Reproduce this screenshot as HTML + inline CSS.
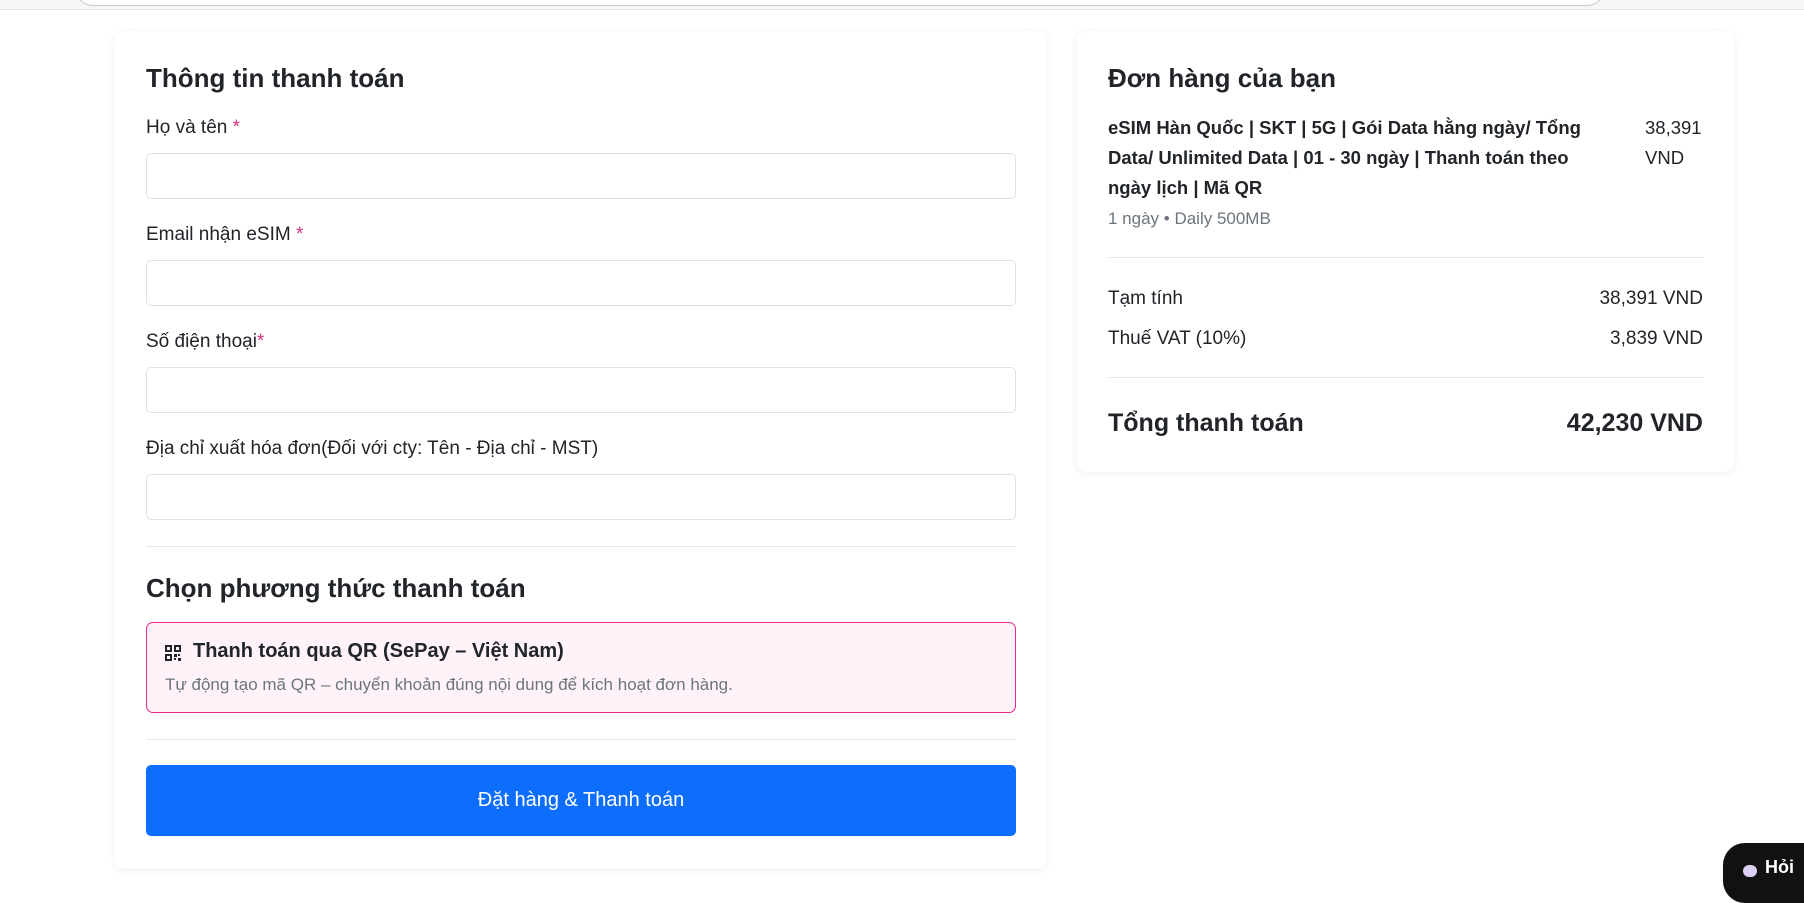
<!DOCTYPE html>
<html><head><meta charset="utf-8"><style>
*{box-sizing:border-box;margin:0;padding:0}
body{width:1804px;height:878px;overflow:hidden;background:#fff;font-family:"Liberation Sans",sans-serif;color:#212529;position:relative}
.top{position:absolute;left:0;top:0;width:1804px;height:10px;background:#f6f6f6;border-bottom:1px solid #e6e6e6}
.search{position:absolute;left:75px;top:-30px;width:1530px;height:36px;border:1px solid #ccc;border-radius:18px;background:#fff}
.card{position:absolute;background:#fff;border-radius:10px;box-shadow:0 1px 8px rgba(0,0,0,.07)}
.abs{position:absolute;white-space:nowrap}
h2{font-size:26px;font-weight:bold}
.lab{font-size:19px;color:#212529}
.req{color:#d63384}
.inp{position:absolute;left:31px;width:870px;height:46px;border:1px solid #dee2e6;border-radius:5px;background:#fff}
.hr{position:absolute;height:1px;background:#e5e7ea}
.pay{position:absolute;left:31px;top:591px;width:870px;height:91px;border:1.5px solid #e8288c;border-radius:7px;background:#fff3f9}
.btn{position:absolute;left:31px;top:734px;width:870px;height:71px;background:#0d6efd;border-radius:5px;color:#fff;font-size:20px;text-align:center;line-height:71px}
.chat{position:absolute;left:1723px;top:843px;width:120px;height:60px;background:#111;border-radius:22px}
</style></head><body>
<div class="top"><div class="search"></div></div>

<div class="card" style="left:115px;top:31px;width:932px;height:838px">
  <h2 class="abs" style="left:31px;top:32px">Thông tin thanh toán</h2>
  <div class="abs lab" style="left:31px;top:86px">Họ và tên <span class="req">*</span></div>
  <div class="inp" style="top:122px"></div>
  <div class="abs lab" style="left:31px;top:193px">Email nhận eSIM <span class="req">*</span></div>
  <div class="inp" style="top:229px"></div>
  <div class="abs lab" style="left:31px;top:300px">Số điện thoại<span class="req">*</span></div>
  <div class="inp" style="top:336px"></div>
  <div class="abs lab" style="left:31px;top:407px">Địa chỉ xuất hóa đơn(Đối với cty: Tên - Địa chỉ - MST)</div>
  <div class="inp" style="top:443px"></div>
  <div class="hr" style="left:31px;top:515px;width:870px"></div>
  <h2 class="abs" style="left:31px;top:542px">Chọn phương thức thanh toán</h2>
  <div class="pay">
    <svg class="abs" style="left:18px;top:22px" width="16" height="16" viewBox="0 0 16 16"><g fill="none" stroke="#212529" stroke-width="2"><rect x="1" y="1" width="5" height="5"/><rect x="10" y="1" width="5" height="5"/><rect x="1" y="10" width="5" height="5"/></g><rect x="9" y="9" width="3" height="3" fill="#212529"/><rect x="13" y="13" width="3" height="3" fill="#212529"/><rect x="13" y="9" width="2" height="2" fill="#212529"/><rect x="9" y="13" width="2" height="2" fill="#212529"/></svg>
    <div class="abs" style="left:46px;top:17px;font-size:20px;font-weight:bold">Thanh toán qua QR (SePay – Việt Nam)</div>
    <div class="abs" style="left:18px;top:52px;font-size:17px;color:#6c757d">Tự động tạo mã QR – chuyển khoản đúng nội dung để kích hoạt đơn hàng.</div>
  </div>
  <div class="hr" style="left:31px;top:708px;width:870px"></div>
  <div class="btn">Đặt hàng &amp; Thanh toán</div>
</div>

<div class="card" style="left:1077px;top:31px;width:657px;height:441px">
  <h2 class="abs" style="left:31px;top:32px">Đơn hàng của bạn</h2>
  <div class="abs" style="left:31px;top:82px;font-size:18.5px;font-weight:bold;line-height:30px">eSIM Hàn Quốc | SKT | 5G | Gói Data hằng ngày/ Tổng<br>Data/ Unlimited Data | 01 - 30 ngày | Thanh toán theo<br>ngày lịch | Mã QR</div>
  <div class="abs" style="left:568px;top:82px;font-size:18.5px;line-height:30px">38,391<br>VND</div>
  <div class="abs" style="left:31px;top:178px;font-size:17px;color:#6c757d">1 ngày • Daily 500MB</div>
  <div class="hr" style="left:31px;top:226px;width:595px"></div>
  <div class="abs" style="left:31px;top:257px;font-size:19px">Tạm tính</div>
  <div class="abs" style="right:31px;top:257px;font-size:19px">38,391 VND</div>
  <div class="abs" style="left:31px;top:297px;font-size:19px">Thuế VAT (10%)</div>
  <div class="abs" style="right:31px;top:297px;font-size:19px">3,839 VND</div>
  <div class="hr" style="left:31px;top:346px;width:595px"></div>
  <div class="abs" style="left:31px;top:378px;font-size:25px;font-weight:bold">Tổng thanh toán</div>
  <div class="abs" style="right:31px;top:378px;font-size:25px;font-weight:bold">42,230 VND</div>
</div>

<div class="chat"><div class="abs" style="left:20px;top:22px;width:14px;height:12px;border-radius:6px;background:#ddd0f5"></div><div class="abs" style="left:42px;top:14px;color:#fff;font-weight:bold;font-size:18px">Hỏi</div></div>
</body></html>
